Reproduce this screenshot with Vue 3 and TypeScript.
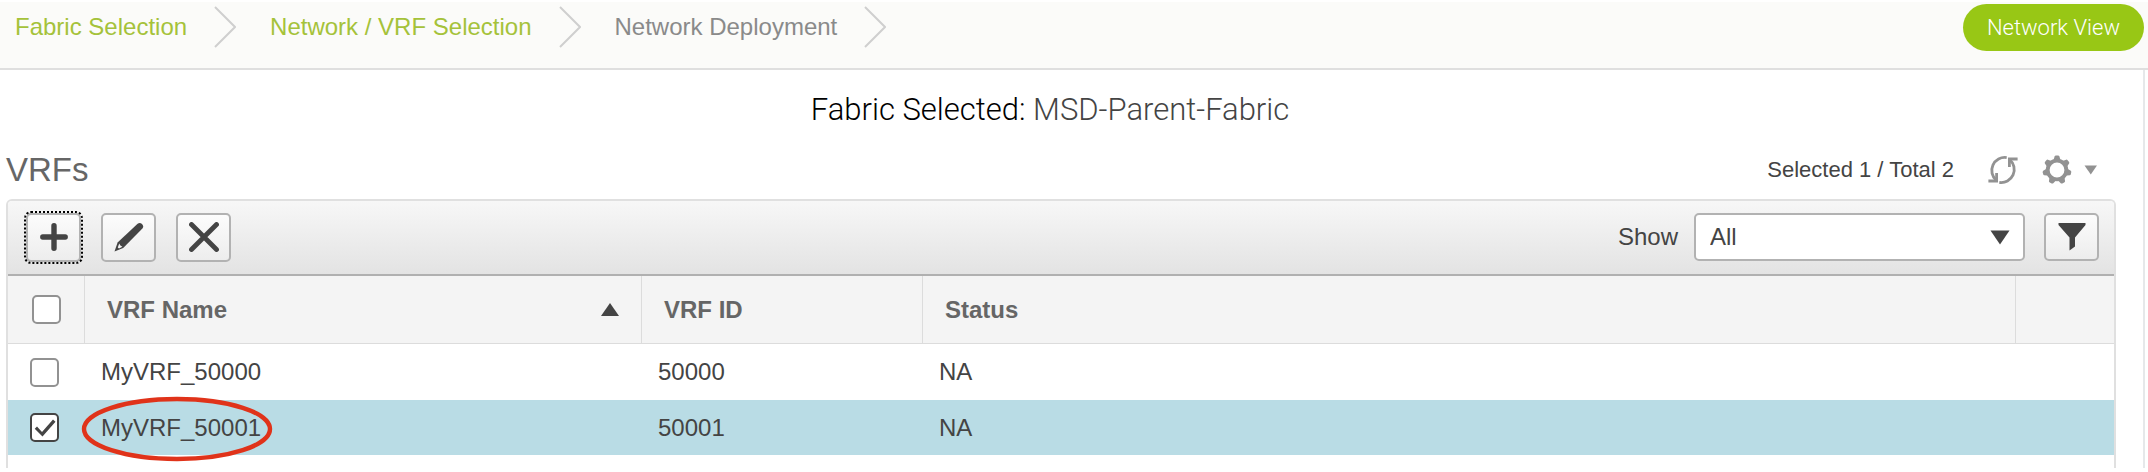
<script setup lang="ts">
import { computed, ref } from 'vue'

interface Vrf {
  name: string
  id: number
  status: string
  selected: boolean
  marked: boolean
}

const steps = [
  { label: 'Fabric Selection', current: false },
  { label: 'Network / VRF Selection', current: false },
  { label: 'Network Deployment', current: true },
]

const fabric = 'MSD-Parent-Fabric'
const show = ref('All')
const vrfs = ref<Vrf[]>([
  { name: 'MyVRF_50000', id: 50000, status: 'NA', selected: false, marked: false },
  { name: 'MyVRF_50001', id: 50001, status: 'NA', selected: true, marked: true },
])

const selectedCount = computed(() => vrfs.value.filter((v) => v.selected).length)
const allSelected = computed({
  get: () => selectedCount.value === vrfs.value.length,
  set: (on: boolean) => vrfs.value.forEach((v) => (v.selected = on)),
})
</script>

<template>
  <div class="page">
    <header class="topbar">
      <nav class="crumbs" aria-label="Deployment steps">
        <template v-for="step in steps" :key="step.label">
          <a href="#" class="crumb" :class="{ current: step.current }">{{ step.label }}</a>
          <svg class="chevron" viewBox="0 0 22 42" aria-hidden="true">
            <path d="M1 1 L21 21 L1 41" />
          </svg>
        </template>
      </nav>
      <button type="button" class="view-btn">Network View</button>
    </header>

    <main class="content">
      <p class="fabric"><span class="fabric-label">Fabric Selected:</span> {{ fabric }}</p>

      <div class="titlebar">
        <h1 class="title">VRFs</h1>
        <div class="meta">
          <span class="count">Selected {{ selectedCount }} / Total {{ vrfs.length }}</span>
          <button type="button" class="plain refresh" aria-label="Refresh">
            <svg width="30" height="30" viewBox="0 0 30 30" aria-hidden="true">
              <g fill="none" stroke="#929292" stroke-width="2.8">
                <path d="M18.7 2.6 A13 13 0 0 0 8.4 25.4" />
                <path d="M11.3 27.4 A13 13 0 0 0 21.6 4.6" />
                <path d="M29.6 4 H21.4 V12" />
                <path d="M0.4 26 H8.6 V18" />
              </g>
            </svg>
          </button>
          <button type="button" class="plain gear" aria-label="Settings">
            <svg width="30" height="30" viewBox="0 0 30 30" aria-hidden="true">
              <g fill="#929292">
                <path
                  v-for="n in 7"
                  :key="n"
                  d="M11 6.5 L12.6 1.4 Q13 0.6 14 0.6 H16 Q17 0.6 17.4 1.4 L19 6.5 Z"
                  :transform="`rotate(${(n * 360) / 7} 15 15)`"
                />
              </g>
              <circle cx="15" cy="15" r="9.3" fill="none" stroke="#929292" stroke-width="3.8" />
            </svg>
            <svg width="14" height="10" viewBox="0 0 14 10" aria-hidden="true">
              <path fill="#929292" d="M0.5 0.5 H13 L6.8 9.5 Z" />
            </svg>
          </button>
        </div>
      </div>

      <section class="panel" aria-label="VRFs">
        <div class="toolbar">
          <div class="actions">
            <button type="button" class="tool focused" aria-label="Add">
              <svg width="30" height="30" viewBox="0 0 30 30" aria-hidden="true">
                <path d="M15 3.8 V26.2 M3.8 15 H26.2" stroke="#444" stroke-width="5.4" stroke-linecap="round" />
              </svg>
            </button>
            <button type="button" class="tool" aria-label="Edit">
              <svg width="30" height="30" viewBox="0 0 30 30" aria-hidden="true">
                <path fill="#444" d="M0.5 29.5 L3.6 20.6 L23.6 1.8 Q25.8 0 28 2 Q30.2 4.2 28.4 6.4 L9.2 26 Z" />
                <path fill="#f4f4f4" d="M3.8 25.6 L5.2 21.4 L6.4 23.6 L8.4 24.8 L5 26.6 Z" />
              </svg>
            </button>
            <button type="button" class="tool" aria-label="Delete">
              <svg width="30" height="30" viewBox="0 0 30 30" aria-hidden="true">
                <path d="M2.5 2.5 L27.5 27.5 M27.5 2.5 L2.5 27.5" stroke="#444" stroke-width="4.8" stroke-linecap="round" />
              </svg>
            </button>
          </div>
          <div class="filters">
            <label for="show">Show</label>
            <span class="select">
              <select id="show" v-model="show">
                <option>All</option>
                <option>Selected</option>
              </select>
              <svg class="arrow" width="20" height="15" viewBox="0 0 20 15" aria-hidden="true">
                <path fill="#444" d="M0.5 0.5 H19.5 L10 14.5 Z" />
              </svg>
            </span>
            <button type="button" class="tool filter" aria-label="Filter">
              <svg width="28" height="28" viewBox="0 0 28 28" aria-hidden="true">
                <path fill="#444" d="M0.5 0 H27.5 V2 L17 14.5 V23.5 L11.5 27.5 V14.5 L0.5 2 Z" />
              </svg>
            </button>
          </div>
        </div>

        <table class="grid">
          <colgroup>
            <col class="c-check" />
            <col class="c-name" />
            <col class="c-id" />
            <col />
            <col class="c-end" />
          </colgroup>
          <thead>
            <tr>
              <th class="check"><input v-model="allSelected" type="checkbox" aria-label="Select all VRFs" /></th>
              <th scope="col" aria-sort="ascending">
                <span class="sorted">
                  VRF Name
                  <svg width="18" height="13" viewBox="0 0 18 13" aria-hidden="true">
                    <path fill="#444" d="M0 13 L9 0 L18 13 Z" />
                  </svg>
                </span>
              </th>
              <th scope="col">VRF ID</th>
              <th scope="col">Status</th>
              <th></th>
            </tr>
          </thead>
          <tbody>
            <tr v-for="vrf in vrfs" :key="vrf.id" :class="{ selected: vrf.selected }">
              <td class="check"><input v-model="vrf.selected" type="checkbox" :aria-label="`Select ${vrf.name}`" /></td>
              <td>
                <span class="name">
                  {{ vrf.name }}
                  <svg v-if="vrf.marked" class="mark" viewBox="0 0 192 66" aria-hidden="true">
                    <ellipse cx="96" cy="33" rx="93" ry="30" fill="none" stroke="#e0331a" stroke-width="4.4" />
                  </svg>
                </span>
              </td>
              <td>{{ vrf.id }}</td>
              <td>{{ vrf.status }}</td>
              <td></td>
            </tr>
          </tbody>
        </table>
      </section>
    </main>
  </div>
</template>

<style>
body {
  margin: 0;
  background: #fff;
}
</style>

<style scoped>
.page {
  font-family: "Liberation Sans", Arial, sans-serif;
  font-size: 24px;
  line-height: 28px;
  color: #444;
}

button,
select {
  font: inherit;
  color: inherit;
  margin: 0;
  padding: 0;
}

svg {
  display: block;
}

.topbar {
  display: flex;
  align-items: flex-start;
  justify-content: space-between;
  box-sizing: border-box;
  height: 70px;
  padding: 2px 4px 0 15px;
  border-top: 2px solid #fff;
  border-bottom: 2px solid #dfdfdf;
  background: #fbfbf9;
}

.crumbs {
  display: flex;
  align-items: center;
}

.crumb {
  color: #a5c23a;
  text-decoration: none;
}

.crumb.current {
  color: #8a8a8a;
}

.chevron {
  width: 22px;
  height: 46px;
  margin: 0 34px 0 27px;
  fill: none;
  stroke: #cfcfcf;
  stroke-width: 2;
}

.view-btn {
  height: 47px;
  padding: 0 24px;
  border: 0;
  border-radius: 24px;
  background: #98c715;
  color: #fff;
  font-family: Roboto, sans-serif;
  font-weight: 300;
  font-size: 22px;
}

.content {
  margin-right: 3px;
  padding: 21px 27px 0 6px;
  border-right: 2px solid #e6e8ea;
}

.fabric {
  margin: 0;
  padding-right: 22px;
  font-family: Roboto, sans-serif;
  font-weight: 300;
  font-size: 31px;
  line-height: 38px;
  text-align: center;
}

.fabric-label {
  color: #000;
}

.titlebar {
  display: flex;
  align-items: center;
  justify-content: space-between;
  box-sizing: border-box;
  height: 70px;
  padding: 12px 18px 0 0;
}

.title {
  margin: 0;
  color: #666;
  font-size: 33px;
  font-weight: 400;
}

.meta {
  display: flex;
  align-items: center;
}

.count {
  font-size: 22px;
}

.plain {
  display: flex;
  align-items: center;
  gap: 12px;
  border: 0;
  background: none;
}

.refresh {
  margin-left: 34px;
}

.gear {
  margin-left: 24px;
}

.panel {
  padding-bottom: 13px;
  border: 2px solid #e0e0e0;
  border-bottom: 0;
  border-radius: 6px 6px 0 0;
}

.toolbar {
  display: flex;
  align-items: center;
  justify-content: space-between;
  box-sizing: border-box;
  height: 75px;
  padding: 0 15px 1px 18px;
  border-bottom: 2px solid #b0b0b0;
  border-radius: 4px 4px 0 0;
  background: linear-gradient(#f7f7f7, #e3e3e3);
}

.actions {
  display: flex;
  gap: 20px;
}

.tool {
  display: flex;
  align-items: center;
  justify-content: center;
  box-sizing: border-box;
  width: 55px;
  height: 49px;
  border: 2px solid #b2b2b2;
  border-radius: 5px;
  background: linear-gradient(#fcfcfc, #ededed);
}

.tool.focused {
  outline: 2px dotted #000;
}

.filters {
  display: flex;
  align-items: center;
}

.select {
  position: relative;
  flex: none;
  width: 331px;
  margin: 0 19px 0 16px;
}

.select select {
  display: block;
  box-sizing: border-box;
  width: 100%;
  height: 48px;
  padding: 0 44px 0 14px;
  border: 2px solid #b2b2b2;
  border-radius: 5px;
  background: #fff;
  appearance: none;
}

.arrow {
  position: absolute;
  top: 17px;
  right: 15px;
  pointer-events: none;
}

.filter {
  height: 48px;
}

.grid {
  width: 100%;
  border-collapse: separate;
  border-spacing: 0;
  table-layout: fixed;
}

.c-check {
  width: 77px;
}

.c-name {
  width: 557px;
}

.c-id {
  width: 281px;
}

.c-end {
  width: 98px;
}

th {
  box-sizing: border-box;
  height: 68px;
  padding: 0 22px;
  border-right: 1px solid #dcdcdc;
  border-bottom: 1px solid #dcdcdc;
  background: #f4f4f4;
  color: #666;
  font-weight: 700;
  text-align: left;
}

th:last-child {
  border-right: 0;
}

td {
  box-sizing: border-box;
  height: 56px;
  padding: 0 16px;
}

th.check {
  padding: 0 0 0 24px;
}

td.check {
  padding: 0 0 0 22px;
}

.selected td {
  height: 55px;
  background: #b9dce5;
}

.sorted {
  display: flex;
  align-items: center;
  justify-content: space-between;
}

.name {
  position: relative;
}

.mark {
  position: absolute;
  top: -18px;
  left: -20px;
  width: 192px;
  height: 66px;
  pointer-events: none;
}

input[type="checkbox"] {
  display: block;
  box-sizing: border-box;
  width: 29px;
  height: 29px;
  margin: 0;
  border: 2px solid #929292;
  border-radius: 5px;
  background: #fff;
  appearance: none;
}

input[type="checkbox"]:checked {
  border-color: #444;
}

input[type="checkbox"]:checked::before {
  content: "";
  display: block;
  width: 100%;
  height: 100%;
  background: #444;
  clip-path: polygon(11% 55%, 20% 46%, 40% 68%, 84% 18%, 94% 27%, 42% 86%);
}
</style>
